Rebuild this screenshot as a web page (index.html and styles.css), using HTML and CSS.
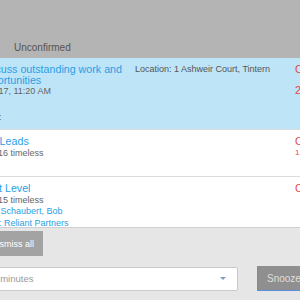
FILE: index.html
```html
<!DOCTYPE html>
<html lang="en">
<head>
  <meta charset="UTF-8">
  <title>Reminders</title>
  <meta name="viewport" content="width=device-width, initial-scale=1.0">
  <link rel="stylesheet" href="styles.css">
</head>
<body>
  <div class="reminders">
    <div class="tabs">
      <span class="tab">Unconfirmed</span>
    </div>

    <div class="list">
      <div class="row selected">
        <div class="main">
          <a class="title">Discuss outstanding work and opportunities</a>
          <div class="sub">Aug 17, 11:20 AM</div>
          <div class="sub note">Note:</div>
        </div>
        <div class="location">Location: 1 Ashweir Court, Tintern</div>
        <div class="due">
          <div>Conflict</div>
          <div class="due-second">2 hours ago</div>
        </div>
      </div>

      <div class="row">
        <div class="main">
          <a class="title">Hot Leads</a>
          <div class="sub">Mar 16 timeless</div>
        </div>
        <div class="location"></div>
        <div class="due">
          <div>Overdue</div>
          <div class="due-small">1 day</div>
        </div>
      </div>

      <div class="row">
        <div class="main">
          <a class="title">Next Level</a>
          <div class="sub">Mar 15 timeless</div>
          <a class="sub link">With Schaubert, Bob</a>
          <a class="sub link">User: Reliant Partners</a>
        </div>
        <div class="location"></div>
        <div class="due">
          <div>Conflict</div>
        </div>
      </div>
    </div>

    <div class="footer">
      <button type="button" class="btn btn-dismiss">Dismiss all</button>
      <div class="snooze">
        <div class="select">
          <span>15 minutes</span>
          <span class="caret"></span>
        </div>
        <button type="button" class="btn btn-snooze">Snooze</button>
      </div>
    </div>
  </div>
</body>
</html>
```

FILE: styles.css
```css
body {
  margin: 0;
  padding: 0;
  width: 300px;
  height: 300px;
  overflow: hidden;
  font-family: "Liberation Sans", Arial, sans-serif;
  background: #e6e6e6;
}
.reminders {
  width: 300px;
  height: 300px;
  display: flex;
  flex-direction: column;
  overflow: hidden;
}
.tabs {
  height: 58px;
  box-sizing: border-box;
  padding: 37px 0 0 14px;
  background: #b4b4b4;
}
.tab {
  font-size: 10px;
  line-height: 12px;
  color: #555;
}
.list {
  height: 169px;
  overflow: hidden;
  background: #fff;
  border-bottom: 1px solid #cfcfcf;
}
.row {
  display: grid;
  grid-template-columns: 150px 155px 1fr;
  column-gap: 5px;
  margin-left: -20px;
  width: 340px;
  min-height: 47px;
  box-sizing: border-box;
  padding: 6px 0 5px;
  border-bottom: 1px solid #dcdcdc;
  background: #fff;
}
.row.selected {
  background: #bee4f8;
  padding-bottom: 5px;
}
.main {
  display: flex;
  flex-direction: column;
}
.title {
  font-size: 10.7px;
  line-height: 11px;
  color: #2a9fe4;
}
.sub {
  font-size: 9px;
  line-height: 11.5px;
  color: #666;
  margin-top: 1px;
  white-space: nowrap;
}
.title + .sub {
  margin-top: 0;
}
.row + .row .title + .sub {
  margin-top: 1px;
}
.sub.note {
  margin-top: 14.5px;
}
.sub.link {
  color: #2a9fe4;
  margin-top: 0;
}
.location {
  font-size: 9px;
  line-height: 11px;
  color: #555;
  white-space: nowrap;
}
.due {
  font-size: 10.7px;
  line-height: 11px;
  color: #e24848;
  white-space: nowrap;
}
.due-second {
  margin-top: 10px;
}
.due-small {
  font-size: 8px;
}
.footer {
  flex: 1;
  background: #e6e6e6;
  padding-top: 3px;
  display: flex;
  flex-direction: column;
  align-items: flex-start;
}
.btn {
  border: none;
  font-family: "Liberation Sans", Arial, sans-serif;
  font-size: 9px;
  cursor: pointer;
}
.btn-dismiss {
  margin-left: -18px;
  height: 25px;
  padding: 0 9px;
  background: #a3a3a3;
  color: #fff;
}
.snooze {
  margin-top: 10px;
  display: flex;
  align-items: center;
  margin-left: -20px;
}
.select {
  width: 258px;
  height: 24px;
  box-sizing: border-box;
  border: 1px solid #c9c9c9;
  border-radius: 2px;
  background: #fff;
  display: flex;
  align-items: center;
  justify-content: space-between;
  padding: 0 11px 0 6px;
  font-size: 9.5px;
  color: #9a9a9a;
}
.caret {
  width: 0;
  height: 0;
  border-left: 3px solid transparent;
  border-right: 3px solid transparent;
  border-top: 3px solid #7f9fc2;
}
.btn-snooze {
  margin-left: 19px;
  height: 25px;
  padding: 0 9px;
  background: #8f8f8f;
  color: #dedede;
  border-left: 1px solid #5a8ee0;
  border-bottom: 1px solid #5a8ee0;
  font-size: 10px;
}
```
